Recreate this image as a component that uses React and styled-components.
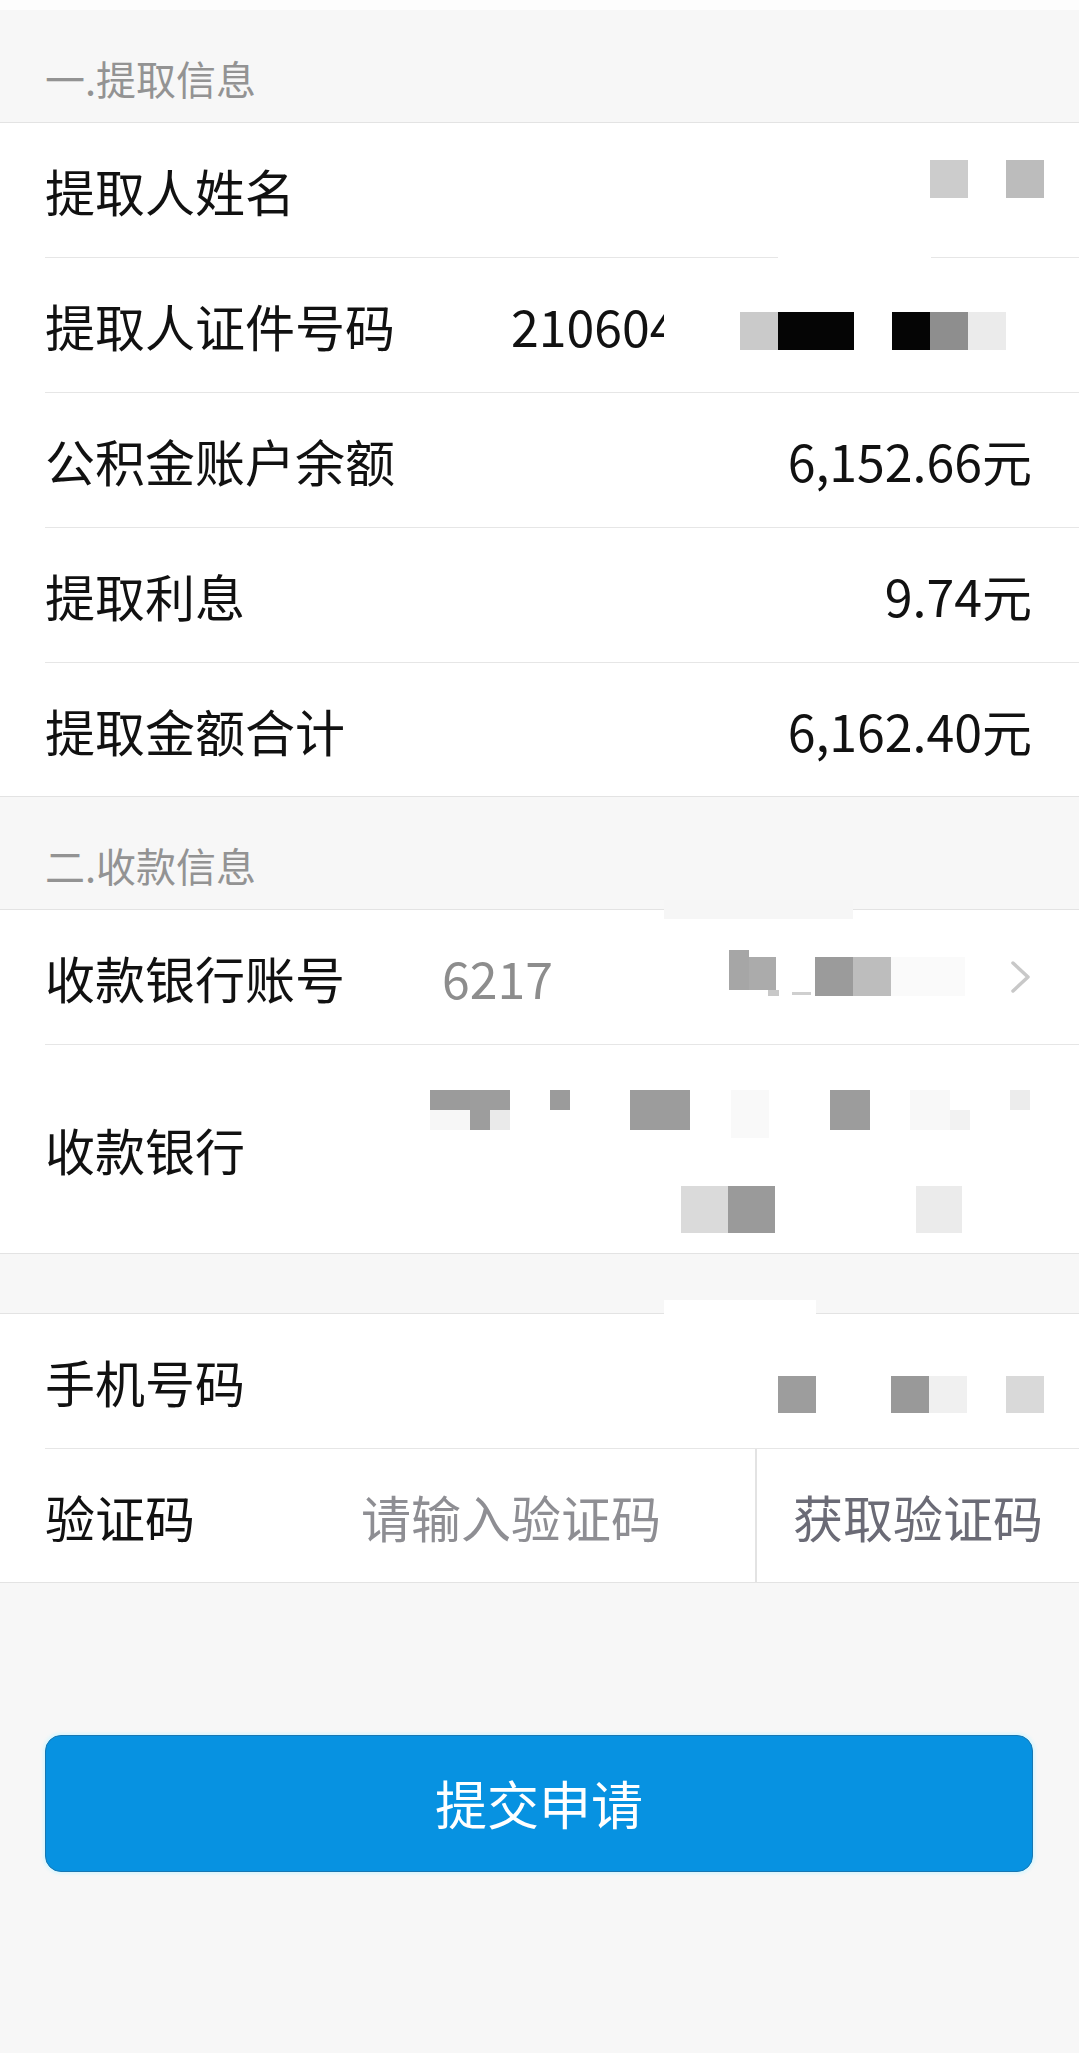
import styled, { createGlobalStyle } from "styled-components";

const nameCells = [
  [152, 37, 38, 38, "#cccccc"],
  [228, 37, 38, 38, "#bcbcbc"],
];

const idCells = [
  [76, 54, 38, 38, "#cacaca"],
  [114, 54, 76, 38, "#050505"],
  [228, 54, 38, 38, "#050505"],
  [266, 54, 38, 38, "#8e8e8e"],
  [304, 54, 38, 38, "#ebebeb"],
];

const accountCells = [
  [170, 40, 20, 40, "#a6a6a6"],
  [190, 47, 27, 33, "#ababab"],
  [209, 80, 11, 6, "#c8c8c8"],
  [233, 82, 19, 3, "#cfcfcf"],
  [256, 47, 38, 39, "#9b9b9b"],
  [294, 47, 38, 39, "#bdbdbd"],
  [332, 47, 74, 39, "#fafafa"],
];

const bankCells = [
  [0, 45, 40, 20, "#9b9b9b"],
  [0, 65, 40, 20, "#f7f7f7"],
  [40, 45, 40, 20, "#9d9d9d"],
  [40, 65, 20, 20, "#9d9d9d"],
  [60, 65, 20, 20, "#eaeaea"],
  [120, 45, 20, 20, "#9b9b9b"],
  [200, 45, 60, 40, "#9c9c9c"],
  [301, 45, 38, 48, "#f9f9f9"],
  [400, 45, 40, 40, "#9c9c9c"],
  [480, 45, 40, 40, "#f8f8f8"],
  [520, 65, 20, 20, "#f2f2f2"],
  [580, 45, 20, 20, "#ececec"],
  [251, 141, 47, 47, "#dadada"],
  [298, 141, 47, 47, "#9a9a9a"],
  [486, 141, 46, 47, "#ebebeb"],
];

const phoneCells = [
  [0, 62, 38, 37, "#9d9d9d"],
  [113, 62, 38, 37, "#999999"],
  [151, 62, 38, 37, "#f0f0f0"],
  [228, 62, 38, 37, "#d9d9d9"],
];

const amounts = [
  { label: "公积金账户余额", value: "6,152.66元" },
  { label: "提取利息", value: "9.74元" },
  { label: "提取金额合计", value: "6,162.40元" },
];

function Mosaic({ width, height, cells, pull }) {
  return (
    <MosaicSvg
      width={width}
      height={height}
      viewBox={`0 0 ${width} ${height}`}
      $pull={pull}
    >
      {cells.map(([x, y, w, h, c], i) => (
        <rect key={i} x={x} y={y} width={w} height={h} fill={c} />
      ))}
    </MosaicSvg>
  );
}

function Chevron() {
  return (
    <ChevronSvg width="22" height="34" viewBox="0 0 22 34">
      <polyline
        points="3,3 18,17 3,31"
        fill="none"
        stroke="#c8c8c8"
        strokeWidth="3.5"
        strokeLinecap="round"
        strokeLinejoin="round"
      />
    </ChevronSvg>
  );
}

export default function App() {
  return (
    <>
      <GlobalStyle />
      <Page>
        <SectionTitle>一.提取信息</SectionTitle>
        <Group>
          <Row>
            <Label>提取人姓名</Label>
            <ValueGroup>
              <Mosaic width={266} height={120} cells={nameCells} pull={12} />
            </ValueGroup>
            <Patch $left={733} $top={127} $width={153} $height={13} />
          </Row>
          <Row>
            <Label>提取人证件号码</Label>
            <ValueGroup>
              {/* the last digit is half hidden by the redaction, as in the shot */}
              <Digits $width={153} $cut>
                210604
              </Digits>
              <Mosaic width={368} height={120} cells={idCells} />
            </ValueGroup>
          </Row>
          {amounts.map((item) => (
            <Row key={item.label}>
              <Label>{item.label}</Label>
              <Value>{item.value}</Value>
            </Row>
          ))}
        </Group>

        <SectionTitle>二.收款信息</SectionTitle>
        <Group>
          <Row>
            <Label>收款银行账号</Label>
            <ValueGroup>
              <Digits $width={117} $muted>
                6217
              </Digits>
              <Mosaic width={451} height={120} cells={accountCells} />
              <Chevron />
            </ValueGroup>
            <Patch
              $left={619}
              $top={-10}
              $width={189}
              $height={19}
              $color="#f6f6f6"
            />
          </Row>
          <Row $tall>
            <Label>收款银行</Label>
            <ValueGroup>
              <Mosaic width={602} height={200} cells={bankCells} />
            </ValueGroup>
          </Row>
        </Group>

        <Group $gap={59}>
          <Row>
            <Label>手机号码</Label>
            <ValueGroup>
              <Mosaic width={266} height={120} cells={phoneCells} pull={12} />
            </ValueGroup>
            <Patch $left={619} $top={-14} $width={152} $height={17} />
          </Row>
          <Row $flush>
            <CodeLabel>验证码</CodeLabel>
            <CodeInput placeholder="请输入验证码" />
            <VLine />
            <CodeButton type="button">获取验证码</CodeButton>
          </Row>
        </Group>

        <SubmitButton type="button">提交申请</SubmitButton>
      </Page>
    </>
  );
}

const GlobalStyle = createGlobalStyle`
  * {
    box-sizing: border-box;
  }

  html,
  body {
    margin: 0;
    padding: 0;
    background: #f7f7f7;
  }

  body {
    font-family: "Noto Sans CJK SC", "Noto Sans", sans-serif;
    -webkit-font-smoothing: antialiased;
  }
`;

const Page = styled.div`
  min-height: 100vh;
  background: #f7f7f7;
  border-top: 10px solid #fdfdfd;
  overflow: hidden;
`;

const SectionTitle = styled.div`
  height: 112px;
  padding: 24px 0 0 45px;
  display: flex;
  align-items: center;
  font-size: 40px;
  line-height: 1.2;
  color: #939393;
`;

const Group = styled.div`
  margin-top: ${(p) => p.$gap || 0}px;
  background: #fff;
  border-top: 1px solid #e3e3e3;
  border-bottom: 1px solid #e3e3e3;
`;

const Row = styled.div`
  position: relative;
  display: flex;
  align-items: center;
  justify-content: space-between;
  height: ${(p) => (p.$tall ? 209 : 135)}px;
  margin-left: 45px;
  padding-right: ${(p) => (p.$flush ? 0 : 47)}px;
  border-bottom: 1px solid #e6e6e6;

  &:last-child {
    height: ${(p) => (p.$tall ? 208 : 133)}px;
    border-bottom: none;
  }
`;

const Label = styled.span`
  flex-shrink: 0;
  font-size: 50px;
  line-height: 1.2;
  color: #111;
  white-space: nowrap;
`;

const Value = styled.span`
  font-size: 50px;
  line-height: 1.2;
  color: #111;
  white-space: nowrap;
`;

const ValueGroup = styled.div`
  display: flex;
  align-items: center;
  align-self: stretch;
`;

const Digits = styled.span`
  width: ${(p) => p.$width}px;
  overflow: ${(p) => (p.$cut ? "hidden" : "visible")};
  font-size: 50px;
  line-height: 1.2;
  color: ${(p) => (p.$muted ? "#8d8d8d" : "#111")};
  white-space: nowrap;
`;

const MosaicSvg = styled.svg`
  display: block;
  flex-shrink: 0;
  align-self: flex-start;
  margin-right: ${(p) => -(p.$pull || 0)}px;
`;

const ChevronSvg = styled.svg`
  display: block;
  flex-shrink: 0;
`;

const Patch = styled.div`
  position: absolute;
  left: ${(p) => p.$left}px;
  top: ${(p) => p.$top}px;
  width: ${(p) => p.$width}px;
  height: ${(p) => p.$height}px;
  background: ${(p) => p.$color || "#fff"};
  z-index: 1;
`;

const CodeLabel = styled(Label)`
  width: 316px;
`;

const CodeInput = styled.input`
  flex: 1;
  min-width: 0;
  padding: 0;
  border: none;
  outline: none;
  background: transparent;
  font-family: inherit;
  font-size: 50px;
  color: #111;

  &::placeholder {
    color: #8e8e93;
  }
`;

const VLine = styled.div`
  width: 2px;
  align-self: stretch;
  background: #e3e3e3;
`;

const CodeButton = styled.button`
  width: 322px;
  height: 100%;
  padding: 0;
  border: none;
  background: transparent;
  font-family: inherit;
  font-size: 50px;
  color: #6b6b76;
  text-align: center;
`;

const SubmitButton = styled.button`
  display: block;
  width: calc(100% - 91px);
  height: 137px;
  margin: 152px 46px 0 45px;
  border-radius: 16px;
  border: 1px solid #1677b3;
  background: #0792e1;
  box-shadow: 0 0 3px 2px rgba(214, 246, 255, 0.9);
  color: #fff;
  font-family: inherit;
  font-size: 52px;
  line-height: 1.2;
`;
